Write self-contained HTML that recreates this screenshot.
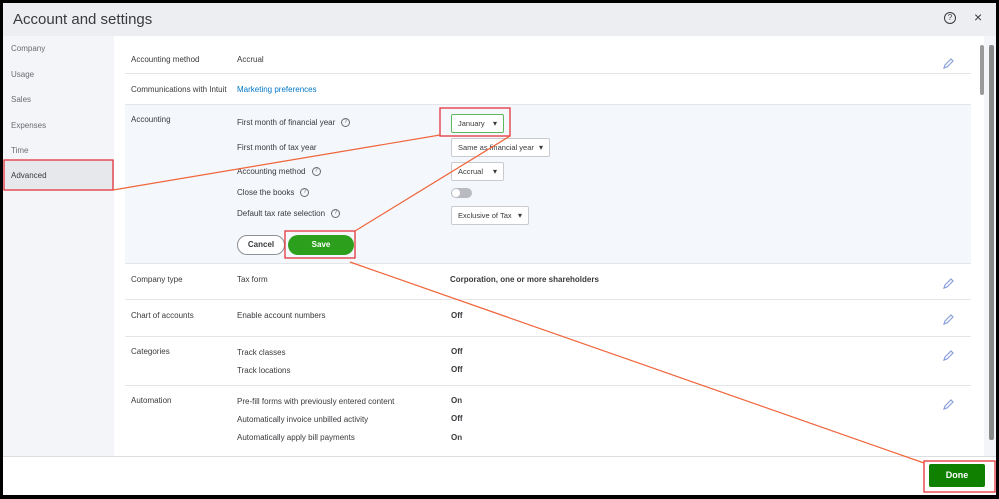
<!DOCTYPE html>
<html><head><meta charset="utf-8"><style>
*{margin:0;padding:0;box-sizing:border-box}
body{width:999px;height:499px;overflow:hidden;background:#000;font-family:"Liberation Sans",sans-serif;position:relative}
.a{position:absolute;white-space:nowrap}
.win{position:absolute;left:3px;top:3px;width:993px;height:492px;background:#f4f5f8;overflow:hidden}
.t{font-size:8px;color:#393a3d}
.lab{font-size:8px;color:#393a3d}
.v{font-size:8px;color:#393a3d;font-weight:bold}
.side{font-size:8px;color:#6b6c72}
.hr{position:absolute;left:122px;width:846px;height:1px;background:#e3e5e9}
.dd{position:absolute;background:#fff;border:1px solid #c9cbd0;border-radius:2px;font-size:7.5px;color:#393a3d;padding-left:6px;line-height:17px;height:19px}
.dd:after{content:"▾";position:absolute;right:6px;top:0;font-size:8px}
.q{display:inline-block;width:9px;height:9px;border:1px solid #6b6c72;border-radius:50%;font-size:6px;text-align:center;line-height:7px;margin-left:6px;vertical-align:middle;color:#6b6c72}
.pen{position:absolute;left:943px}
.red{position:absolute;border:1.5px solid #e5343c}
</style></head><body>
<div class="win">
 <div class="a" style="left:0;top:0;width:993px;height:33px;background:#eceef1"></div>
 <div class="a" style="left:10px;top:8px;font-size:15px;color:#393a3d">Account and settings</div>
 <div class="a" style="left:941px;top:9px;width:12px;height:12px;border:1.3px solid #393a3d;border-radius:50%;font-size:8px;text-align:center;line-height:10px;color:#393a3d">?</div>
 <div class="a" style="left:971px;top:6px;font-size:14px;color:#393a3d">×</div>
 <div class="a side" style="left:8px;top:41px">Company</div>
 <div class="a side" style="left:8px;top:67px">Usage</div>
 <div class="a side" style="left:8px;top:92px">Sales</div>
 <div class="a side" style="left:8px;top:118px">Expenses</div>
 <div class="a side" style="left:8px;top:143px">Time</div>
 <div class="a" style="left:1px;top:157px;width:110px;height:30px;background:#e6e8ec"></div>
 <div class="a" style="left:8px;top:168px;font-size:8px;color:#393a3d">Advanced</div>
 <div class="a" style="left:111px;top:33px;width:870px;height:420px;background:#fff"></div>
 <div class="a" style="left:122px;top:101px;width:846px;height:159px;background:#f4f7fb"></div>
 <div class="a lab" style="left:128px;top:52px">Accounting method</div>
 <div class="a t" style="left:234px;top:52px">Accrual</div>
 <div class="hr" style="top:70px"></div>
 <div class="a lab" style="left:128px;top:82px">Communications with Intuit</div>
 <div class="a" style="left:234px;top:82px;font-size:8px;color:#0077c5">Marketing preferences</div>
 <div class="hr" style="top:101px"></div>
 <div class="a lab" style="left:128px;top:112px">Accounting</div>
 <div class="a t" style="left:234px;top:115px">First month of financial year<span class="q">?</span></div>
 <div class="a t" style="left:234px;top:140px">First month of tax year</div>
 <div class="a t" style="left:234px;top:164px">Accounting method<span class="q">?</span></div>
 <div class="a t" style="left:234px;top:185px">Close the books<span class="q">?</span></div>
 <div class="a t" style="left:234px;top:206px">Default tax rate selection<span class="q">?</span></div>
 <div class="dd" style="left:448px;top:111px;width:53px;border-color:#5cb85c">January</div>
 <div class="dd" style="left:448px;top:135px;width:99px">Same as financial year</div>
 <div class="dd" style="left:448px;top:159px;width:53px">Accrual</div>
 <div class="a" style="left:448px;top:185px;width:21px;height:10px;border-radius:5px;background:#b9bbc0"><div style="position:absolute;left:1px;top:1px;width:8px;height:8px;border-radius:50%;background:#fff"></div></div>
 <div class="dd" style="left:448px;top:203px;width:78px">Exclusive of Tax</div>
 <div class="a" style="left:234px;top:232px;width:48px;height:20px;border:1px solid #8d9096;border-radius:10px;background:#fff;font-size:8px;font-weight:bold;color:#393a3d;text-align:center;line-height:18px">Cancel</div>
 <div class="a" style="left:285px;top:232px;width:66px;height:20px;border-radius:10px;background:#2ca01c;font-size:8px;font-weight:bold;color:#fff;text-align:center;line-height:20px">Save</div>
 <div class="hr" style="top:260px"></div>
 <div class="a lab" style="left:128px;top:272px">Company type</div>
 <div class="a t" style="left:234px;top:272px">Tax form</div>
 <div class="a v" style="left:447px;top:272px">Corporation, one or more shareholders</div>
 <div class="hr" style="top:296px"></div>
 <div class="a lab" style="left:128px;top:308px">Chart of accounts</div>
 <div class="a t" style="left:234px;top:308px">Enable account numbers</div>
 <div class="a v" style="left:448px;top:308px">Off</div>
 <div class="hr" style="top:333px"></div>
 <div class="a lab" style="left:128px;top:344px">Categories</div>
 <div class="a t" style="left:234px;top:345px">Track classes</div>
 <div class="a v" style="left:448px;top:344px">Off</div>
 <div class="a t" style="left:234px;top:363px">Track locations</div>
 <div class="a v" style="left:448px;top:362px">Off</div>
 <div class="hr" style="top:382px"></div>
 <div class="a lab" style="left:128px;top:393px">Automation</div>
 <div class="a t" style="left:234px;top:394px">Pre-fill forms with previously entered content</div>
 <div class="a v" style="left:448px;top:393px">On</div>
 <div class="a t" style="left:234px;top:412px">Automatically invoice unbilled activity</div>
 <div class="a v" style="left:448px;top:411px">Off</div>
 <div class="a t" style="left:234px;top:430px">Automatically apply bill payments</div>
 <div class="a v" style="left:448px;top:430px">On</div>
 <div class="a" style="left:977px;top:42px;width:4px;height:50px;background:#9a9a9a;border-radius:2px"></div>
 <div class="a" style="left:986px;top:42px;width:5px;height:395px;background:#8a8a8a;border-radius:2px"></div>
 <div class="a" style="left:0;top:453px;width:993px;height:1px;background:#dcdde1"></div>
 <div class="a" style="left:0;top:454px;width:993px;height:40px;background:#fff"></div>
 <div class="a" style="left:926px;top:461px;width:56px;height:23px;background:#108000;border-radius:2px;font-size:9px;font-weight:bold;color:#fff;text-align:center;line-height:23px">Done</div>
</div>
<svg class="a" style="left:0;top:0" width="999" height="499">
 <g fill="none" stroke="#8aa0d8" stroke-width="1.2">
  <path d="M945 65 L951 59 L953 61 L947 67 L944 68 Z"/>
  <path d="M945 285 L951 279 L953 281 L947 287 L944 288 Z"/>
  <path d="M945 321 L951 315 L953 317 L947 323 L944 324 Z"/>
  <path d="M945 357 L951 351 L953 353 L947 359 L944 360 Z"/>
  <path d="M945 406 L951 400 L953 402 L947 408 L944 409 Z"/>
 </g>
 <g fill="none" stroke="#e5343c" stroke-width="1.3">
  <rect x="4" y="160" width="109" height="30"/>
  <rect x="440" y="108" width="70" height="28"/>
  <rect x="285" y="231" width="70" height="27"/>
  <rect x="924" y="461" width="71" height="31"/>
 </g>
 <g stroke="#f0643a" stroke-width="1.2">
  <line x1="113" y1="190" x2="440" y2="135"/>
  <line x1="355" y1="231" x2="510" y2="136"/>
  <line x1="350" y1="262" x2="924" y2="463"/>
 </g>
</svg>
</body></html>
